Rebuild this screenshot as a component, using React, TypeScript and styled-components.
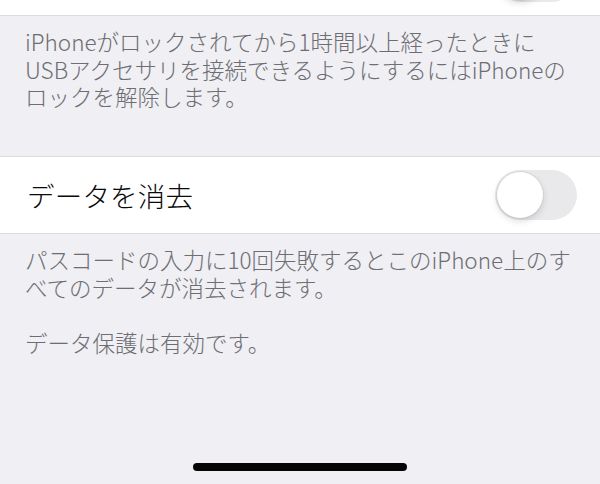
import React from "react";
import styled, { createGlobalStyle } from "styled-components";

const GlobalStyle = createGlobalStyle`
  html, body {
    margin: 0;
    padding: 0;
    background: #efeff4;
  }
  body {
    font-family: "Noto Sans CJK JP", "Noto Sans", sans-serif;
    -webkit-font-smoothing: antialiased;
  }
`;

const Page = styled.div`
  width: 600px;
  height: 484px;
  overflow: hidden;
  background: #efeff4;
  display: flex;
  flex-direction: column;
`;

const Row = styled.div<{ $offsetTop?: number; $topBorder?: boolean }>`
  flex: none;
  height: 76px;
  margin-top: ${(p) => (p.$offsetTop ? `${p.$offsetTop}px` : "0")};
  background: #ffffff;
  border-top: ${(p) => (p.$topBorder ? "1px solid #dcdce0" : "none")};
  border-bottom: 1px solid #dcdce0;
  display: flex;
  align-items: center;
  justify-content: space-between;
  padding: 0 23px 0 27px;
`;

const RowTitle = styled.span`
  font-size: 27.5px;
  font-weight: 300;
  color: #0a0a0a;
  letter-spacing: 0.2px;
`;

const Track = styled.div<{ $on?: boolean }>`
  width: 82px;
  height: 50px;
  border-radius: 25px;
  background: ${(p) => (p.$on ? "#4cd964" : "#e9e9eb")};
  box-sizing: border-box;
  padding: 2px;
  display: flex;
  justify-content: ${(p) => (p.$on ? "flex-end" : "flex-start")};
`;

const Knob = styled.div`
  width: 46px;
  height: 46px;
  border-radius: 50%;
  background: #ffffff;
  box-shadow: 0 3px 7px rgba(0, 0, 0, 0.14), 0 0 0 1px rgba(0, 0, 0, 0.05);
`;

const Footer = styled.div<{ $height?: number }>`
  flex: none;
  height: ${(p) => (p.$height ? `${p.$height}px` : "auto")};
  box-sizing: border-box;
  padding: 12px 20px 0 25px;
  color: #6d6d72;
  font-size: 22.5px;
  font-weight: 300;
  line-height: 27.5px;
`;

const Line = styled.div<{ $gapBefore?: boolean }>`
  white-space: nowrap;
  margin-top: ${(p) => (p.$gapBefore ? "27.5px" : "0")};
`;

const Spacer = styled.div`
  flex: 1;
`;

const HomeBar = styled.div`
  flex: none;
  align-self: center;
  width: 214px;
  height: 8px;
  border-radius: 4px;
  background: #050505;
  margin-bottom: 13px;
`;

function Toggle({ on }: { on?: boolean }) {
  return (
    <Track $on={on}>
      <Knob />
    </Track>
  );
}

export default function App() {
  return (
    <>
      <GlobalStyle />
      <Page>
        <Row $offsetTop={-61}>
          <RowTitle />
          <Toggle />
        </Row>
        <Footer $height={140}>
          <Line>iPhoneがロックされてから1時間以上経ったときに</Line>
          <Line>USBアクセサリを接続できるようにするにはiPhoneの</Line>
          <Line>ロックを解除します。</Line>
        </Footer>
        <Row $topBorder>
          <RowTitle>データを消去</RowTitle>
          <Toggle />
        </Row>
        <Footer>
          <Line>パスコードの入力に10回失敗するとこのiPhone上のす</Line>
          <Line>べてのデータが消去されます。</Line>
          <Line $gapBefore>データ保護は有効です。</Line>
        </Footer>
        <Spacer />
        <HomeBar />
      </Page>
    </>
  );
}
